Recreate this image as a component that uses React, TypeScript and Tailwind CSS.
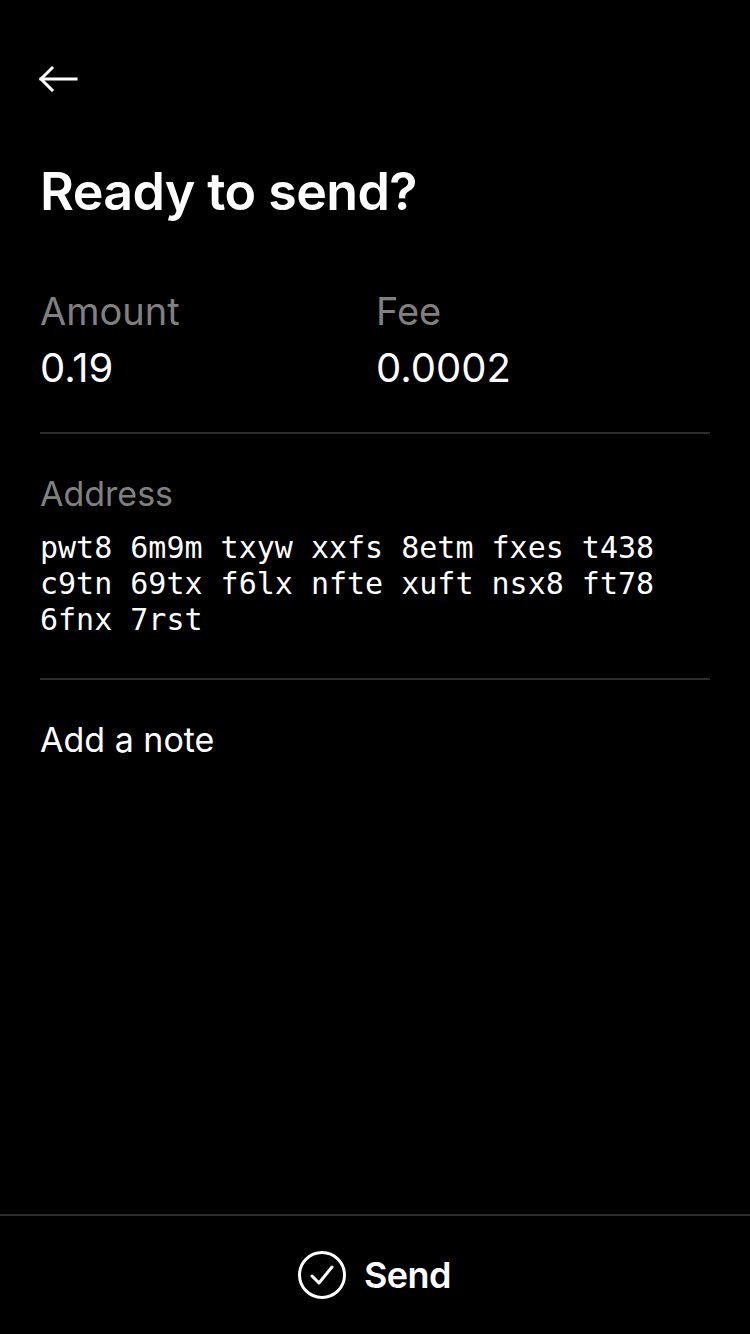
import React from "react";

export default function App() {
  return (
    <div className="w-[750px] h-[1334px] bg-black text-white flex flex-col" style={{ fontFamily: "Inter, 'Noto Sans', sans-serif" }}>
      <div className="flex-1 flex flex-col px-10">
        <div className="pt-[62px] h-[100px]">
          <svg width="42" height="30" viewBox="0 0 42 30" fill="none" stroke="white" strokeWidth="3" strokeLinecap="square" className="-ml-[3px]">
            <path d="M4 17 H39" />
            <path d="M15 6 L4 17 L15 28" />
          </svg>
        </div>
        <h1 className="mt-[62px] text-[52px] leading-[60px] font-semibold tracking-[-0.6px]">Ready to send?</h1>
        <div className="mt-[67px] flex">
          <div className="w-[336px]">
            <div className="text-[38px] leading-[44px] text-[#808080]">Amount</div>
            <div className="text-[40px] leading-[50px] mt-[10px]">0.19</div>
          </div>
          <div>
            <div className="text-[38px] leading-[44px] text-[#808080]">Fee</div>
            <div className="text-[40px] leading-[50px] mt-[10px]">0.0002</div>
          </div>
        </div>
        <div className="mt-[39px] h-[2px] bg-[#2b2b2b]" />
        <div className="mt-[40px] text-[34px] leading-[40px] text-[#808080]">Address</div>
        <div className="mt-[16px] text-[30px] leading-[36px] whitespace-pre" style={{ fontFamily: "'DejaVu Sans Mono', monospace" }}>
          {"pwt8 6m9m txyw xxfs 8etm fxes t438\nc9tn 69tx f6lx nfte xuft nsx8 ft78\n6fnx 7rst"}
        </div>
        <div className="mt-[40px] h-[2px] bg-[#2b2b2b]" />
        <div className="mt-[38px] text-[34px] leading-[44px]">Add a note</div>
      </div>
      <div className="h-[2px] bg-[#2b2b2b]" />
      <div className="h-[118px] flex items-center justify-center gap-[17px]">
        <svg width="50" height="50" viewBox="0 0 50 50" fill="none" stroke="white" strokeWidth="3" strokeLinecap="round" strokeLinejoin="round" className="-ml-[2px]">
          <circle cx="25" cy="25" r="22.5" />
          <path d="M15 26 L22 33 L35 17" />
        </svg>
        <span className="text-[36px] font-semibold tracking-[-0.5px]">Send</span>
      </div>
    </div>
  );
}
